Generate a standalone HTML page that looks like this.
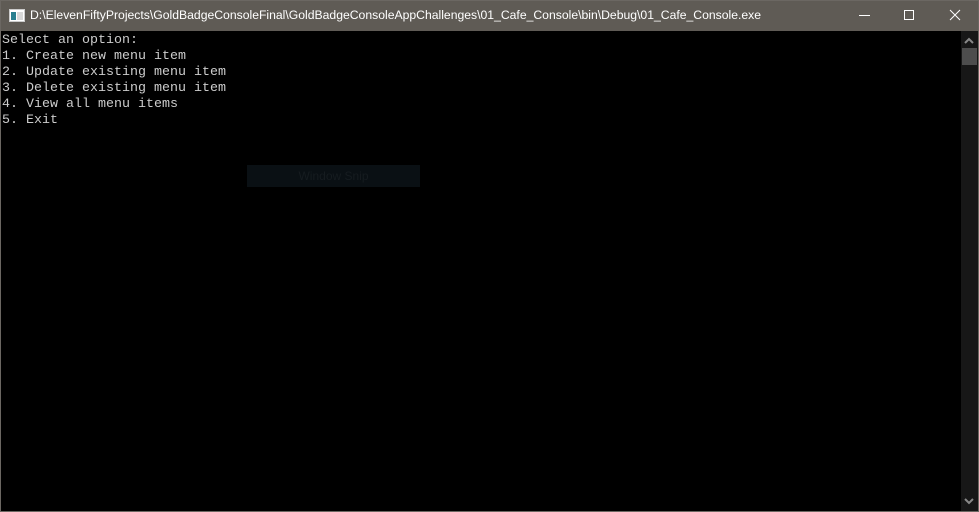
<!DOCTYPE html>
<html><head><style>
html,body{margin:0;padding:0;width:979px;height:512px;overflow:hidden;background:#0c0c0c;}
body{position:relative;}
#frame{position:absolute;left:0;top:0;width:979px;height:512px;box-sizing:border-box;border:1px solid #6b6762;}
#title{position:absolute;left:0;top:0;width:979px;height:31px;background:#5f5b55;}
#ttext{position:absolute;left:30px;top:8px;color:#fff;font:12.2px "Liberation Sans",sans-serif;white-space:nowrap;}
#con{position:absolute;left:1px;top:31px;width:960px;height:480px;background:#000;}
pre{position:absolute;left:2px;top:33px;margin:0;font:13.33px/16px "Liberation Mono",monospace;color:#cccccc;}
#sb{position:absolute;left:961px;top:31px;width:17px;height:480px;background:#171717;}
#thumb{position:absolute;left:962px;top:48px;width:15px;height:17px;background:#4d4d4d;}
#snip{position:absolute;left:247px;top:165px;width:173px;height:22px;background:#0a1014;color:#161c20;font:12px "Liberation Sans",sans-serif;line-height:22px;text-align:center;}
</style></head><body>
<div id="title">
<svg style="position:absolute;left:9px;top:9px" width="16" height="13"><rect x="0.5" y="0.5" width="15" height="12" fill="#fff" stroke="#ccc"/><rect x="2" y="3" width="5" height="8" fill="#2a7f8f"/><rect x="8" y="3" width="6" height="8" fill="#d8d8d8"/></svg>
<div id="ttext">D:\ElevenFiftyProjects\GoldBadgeConsoleFinal\GoldBadgeConsoleAppChallenges\01_Cafe_Console\bin\Debug\01_Cafe_Console.exe</div>
<svg style="position:absolute;left:840px;top:0" width="139" height="31"><line x1="19" y1="15.5" x2="30" y2="15.5" stroke="#fff"/><rect x="64.5" y="10.5" width="9" height="9" fill="none" stroke="#fff"/><path d="M110 10L120 20M120 10L110 20" stroke="#fff"/></svg>
</div>
<div id="con"></div>
<pre>Select an option:
1. Create new menu item
2. Update existing menu item
3. Delete existing menu item
4. View all menu items
5. Exit</pre>
<div id="snip">Window Snip</div>
<div id="sb"></div>
<div id="thumb"></div>
<svg style="position:absolute;left:962px;top:36px" width="14" height="10"><path d="M3 7L7 3L11 7" stroke="#888" stroke-width="2" fill="none"/></svg>
<svg style="position:absolute;left:962px;top:496px" width="14" height="10"><path d="M3 3L7 7L11 3" stroke="#888" stroke-width="2" fill="none"/></svg>
<div id="frame"></div>
</body></html>
